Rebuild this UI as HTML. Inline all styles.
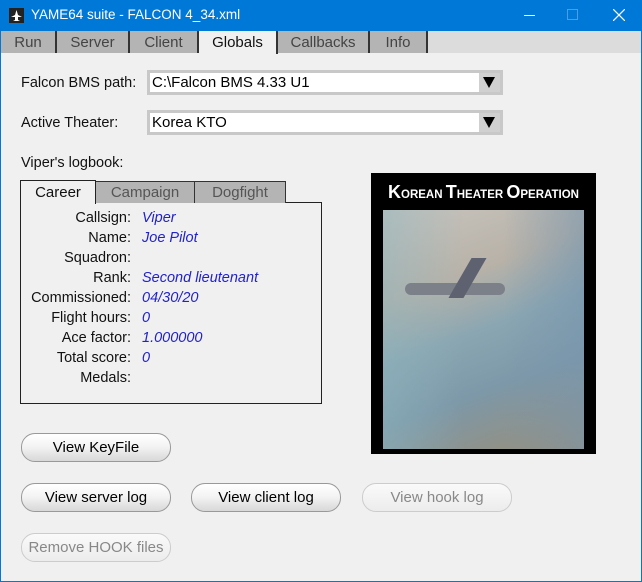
<!DOCTYPE html>
<html><head><style>
*{margin:0;padding:0;box-sizing:border-box}
body{width:642px;height:582px;overflow:hidden;font-family:"Liberation Sans",sans-serif;font-size:14px;background:#0078d7;position:relative}
.a{position:absolute}
#win{left:1px;top:31px;width:640px;height:550px;background:#f0f0f0}
.tab{position:absolute;top:0;height:22px;background:#b4b4b4;border-right:2px solid #333;color:#444;font-size:15px;text-align:center;line-height:23px}
.combo{position:absolute;left:147px;width:356px;height:25px;border:3px solid #c8c8c8;background:#fff;font-size:15px;line-height:19px;padding-left:2px}
.combo .ar{position:absolute;right:0;top:0;width:21px;height:19px;background:#d0d0d0}
.combo .ar:after{content:"";position:absolute;left:4px;top:4px;border-left:6px solid transparent;border-right:6px solid transparent;border-top:11px solid #000}
.btn{position:absolute;width:150px;height:29px;border:1px solid #999;border-radius:14px;background:linear-gradient(#fff,#f4f4f4 45%,#d8d8d8);text-align:center;line-height:27px;font-size:15px;color:#000}
.btn.d{color:#888;border-color:#ccc;background:linear-gradient(#fafafa,#ececec)}
.lab{position:absolute;font-size:14.5px;color:#111}
.r{position:absolute;left:0;width:131px;text-align:right;font-size:14.5px;color:#111}
.v{position:absolute;left:142px;font-size:14.5px;color:#2222cc;font-style:italic}
</style></head><body>
<div class="a" style="left:9px;top:8px;width:15px;height:15px;background:#222"><svg width="15" height="15"><path d="M7.5 2 L9 7 L13 9 L9 9 L9 12 L11 13 L4 13 L6 12 L6 9 L2 9 L6 7 Z" fill="#fff"/></svg></div>
<div class="a" style="left:31px;top:7px;color:#fff;font-size:13.5px">YAME64 suite - FALCON 4_34.xml</div>
<div class="a" style="left:524px;top:15px;width:11px;height:1px;background:#fff"></div>
<div class="a" style="left:567px;top:9px;width:11px;height:11px;border:1px solid #4a9ee6"></div>
<svg class="a" style="left:613px;top:9px" width="12" height="12"><path d="M0 0L12 12M12 0L0 12" stroke="#fff" stroke-width="1.2"/></svg>
<div id="win" class="a">
<div class="a" style="left:0;top:0;width:640px;height:22px;background:#dcdcdc"></div>
<div class="tab" style="left:0;width:56px">Run</div>
<div class="tab" style="left:56px;width:73px">Server</div>
<div class="tab" style="left:129px;width:69px">Client</div>
<div class="tab" style="left:198px;width:79px;background:#f0f0f0;color:#111;height:23px">Globals</div>
<div class="tab" style="left:277px;width:92px">Callbacks</div>
<div class="tab" style="left:369px;width:58px">Info</div>
</div>
<div class="lab" style="left:21px;top:75px">Falcon BMS path:</div>
<div class="combo" style="top:70px">C:\Falcon BMS 4.33 U1<div class="ar"></div></div>
<div class="lab" style="left:21px;top:115px">Active Theater:</div>
<div class="combo" style="top:110px">Korea KTO<div class="ar"></div></div>
<div class="lab" style="left:21px;top:155px">Viper's logbook:</div>
<div class="a" style="left:20px;top:202px;width:302px;height:202px;border:1px solid #222;border-left-width:1px"></div>
<div class="a" style="left:20px;top:180px;width:76px;height:24px;border:1px solid #222;border-bottom:none;background:#f0f0f0;font-size:15px;text-align:center;line-height:24px;color:#111">Career</div>
<div class="a" style="left:96px;top:181px;width:99px;height:22px;background:#b4b4b4;border-right:1px solid #333;border-top:1px solid #333;font-size:15px;text-align:center;line-height:22px;color:#555">Campaign</div>
<div class="a" style="left:195px;top:181px;width:91px;height:22px;background:#b4b4b4;border-right:1px solid #333;border-top:1px solid #333;font-size:15px;text-align:center;line-height:22px;color:#555">Dogfight</div>
<div class="a" style="left:0;top:210px;width:330px">
<div class="r" style="top:0">Callsign:</div><div class="v" style="top:0">Viper</div>
<div class="r" style="top:20px">Name:</div><div class="v" style="top:20px">Joe Pilot</div>
<div class="r" style="top:40px">Squadron:</div>
<div class="r" style="top:60px">Rank:</div><div class="v" style="top:60px">Second lieutenant</div>
<div class="r" style="top:80px">Commissioned:</div><div class="v" style="top:80px">04/30/20</div>
<div class="r" style="top:100px">Flight hours:</div><div class="v" style="top:100px">0</div>
<div class="r" style="top:120px">Ace factor:</div><div class="v" style="top:120px">1.000000</div>
<div class="r" style="top:140px">Total score:</div><div class="v" style="top:140px">0</div>
<div class="r" style="top:160px">Medals:</div>
</div>
<div class="a" style="left:371px;top:173px;width:225px;height:281px;background:#000"></div>
<div class="a" style="left:371px;top:182px;width:225px;text-align:center;color:#fff;font-weight:bold;font-size:11.5px;letter-spacing:0"><span style="font-size:18px">K</span>OREAN <span style="font-size:18px">T</span>HEATER <span style="font-size:18px">O</span>PERATION</div>
<div class="a" style="left:383px;top:210px;width:201px;height:239px;background:linear-gradient(160deg,#c8c4be 0%,#b8b2a8 30%,#8aa6b2 50%,#7d98a8 70%,#9a8e78 100%)"></div>
<div class="a" style="left:383px;top:210px;width:201px;height:239px;background:linear-gradient(90deg,rgba(140,180,190,.5),rgba(0,0,0,0) 40%,rgba(0,0,0,0) 60%,rgba(120,150,175,.6))"></div>
<div class="a" style="left:405px;top:283px;width:100px;height:12px;background:#7c8088;border-radius:6px"></div>
<div class="a" style="left:460px;top:258px;width:15px;height:40px;background:#5e6270;transform:skewX(-30deg)"></div>
<div class="btn" style="left:21px;top:433px">View KeyFile</div>
<div class="btn" style="left:21px;top:483px">View server log</div>
<div class="btn" style="left:191px;top:483px">View client log</div>
<div class="btn d" style="left:362px;top:483px">View hook log</div>
<div class="btn d" style="left:21px;top:533px">Remove HOOK files</div>
</body></html>
